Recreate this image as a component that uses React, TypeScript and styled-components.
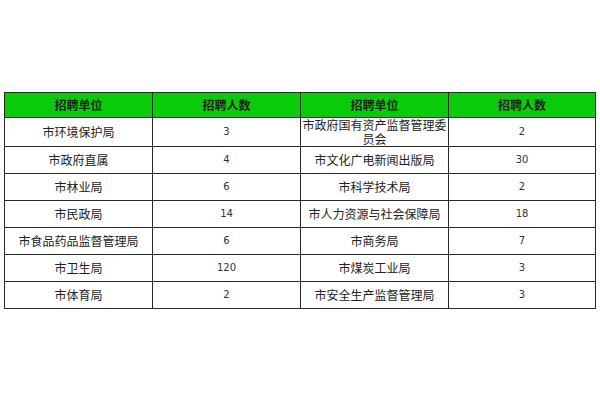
import styled, { createGlobalStyle } from "styled-components";

const GlobalStyle = createGlobalStyle`
    html, body {
        margin: 0;
        padding: 0;
        background: #ffffff;
    }
    body {
        font-family: "Noto Sans CJK SC", "Liberation Sans", sans-serif;
    }
`;

type Row = [string, string, string, string];

const rows: Row[] = [
    ["市环境保护局", "3", "市政府国有资产监督管理委员会", "2"],
    ["市政府直属", "4", "市文化广电新闻出版局", "30"],
    ["市林业局", "6", "市科学技术局", "2"],
    ["市民政局", "14", "市人力资源与社会保障局", "18"],
    ["市食品药品监督管理局", "6", "市商务局", "7"],
    ["市卫生局", "120", "市煤炭工业局", "3"],
    ["市体育局", "2", "市安全生产监督管理局", "3"],
];

const App = () => {
    return (
        <Page>
            <GlobalStyle />
            <Table>
                <colgroup>
                    <col style={{ width: 148 }} />
                    <col style={{ width: 148 }} />
                    <col style={{ width: 148 }} />
                    <col style={{ width: 147 }} />
                </colgroup>
                <thead>
                    <tr>
                        <HeadCell>招聘单位</HeadCell>
                        <HeadCell>招聘人数</HeadCell>
                        <HeadCell>招聘单位</HeadCell>
                        <HeadCell>招聘人数</HeadCell>
                    </tr>
                </thead>
                <tbody>
                    {rows.map((r, i) => (
                        <tr key={i}>
                            <Cell>{r[0]}</Cell>
                            <NumCell>{r[1]}</NumCell>
                            <Cell>{r[2]}</Cell>
                            <NumCell>{r[3]}</NumCell>
                        </tr>
                    ))}
                </tbody>
            </Table>
        </Page>
    );
};

export default App;

const Page = styled.div`
    width: 600px;
    height: 400px;
    padding: 92px 0 0 4px;
    box-sizing: border-box;
    background: #ffffff;
`;

const Table = styled.table`
    border-collapse: collapse;
    table-layout: fixed;
    width: 592px;
`;

const HeadCell = styled.th`
    background-color: #0acb0a;
    border: 1px solid #2a2a2a;
    height: 24px;
    padding: 0 2px;
    font-size: 12px;
    font-weight: bold;
    color: #1e1e1e;
    text-align: center;
    vertical-align: middle;
    line-height: 14px;
`;

const Cell = styled.td`
    border: 1px solid #2a2a2a;
    height: 26px;
    padding: 0 1px;
    font-size: 12px;
    color: #222222;
    text-align: center;
    vertical-align: middle;
    line-height: 14px;
`;

const NumCell = styled(Cell)`
    font-family: "DejaVu Sans", "Liberation Sans", sans-serif;
    font-size: 10px;
    color: #333333;
`;
